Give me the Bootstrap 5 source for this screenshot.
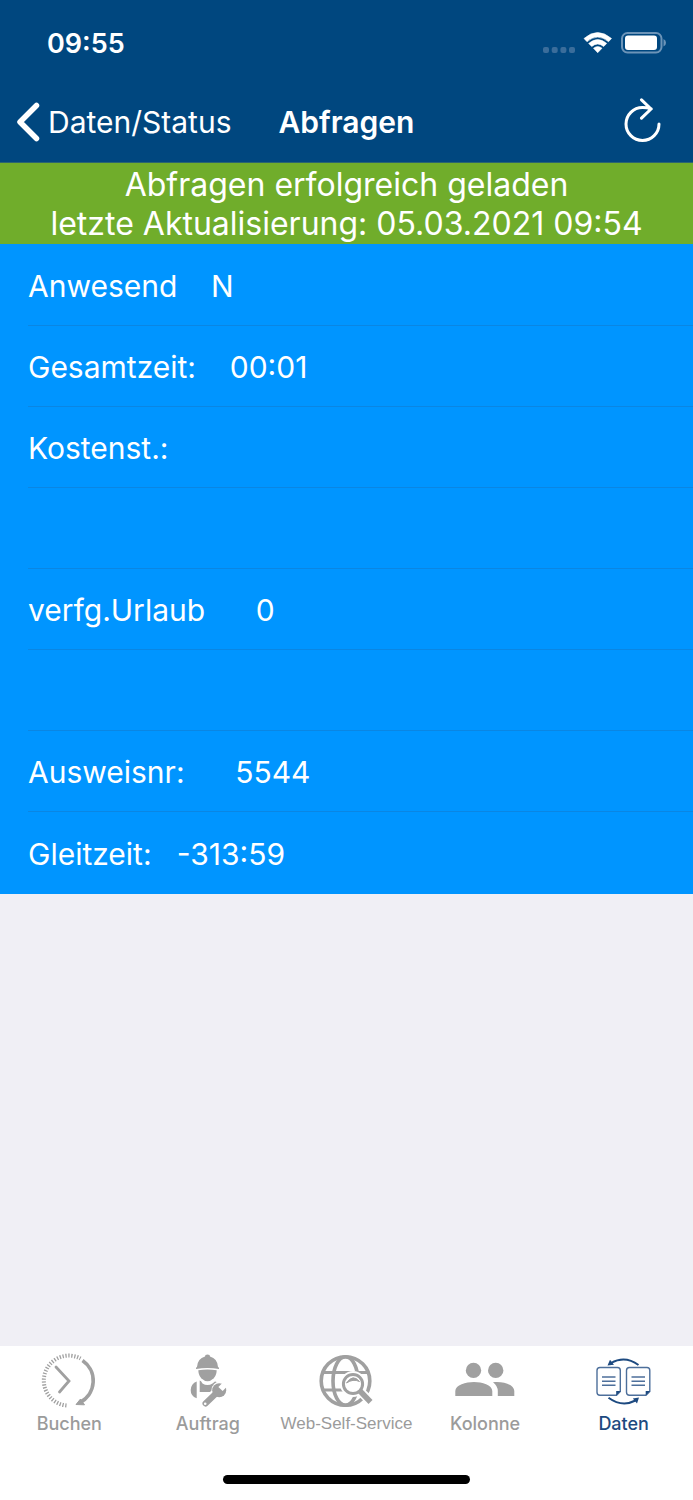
<!DOCTYPE html>
<html lang="de">
<head>
<meta charset="utf-8">
<meta name="viewport" content="width=device-width, initial-scale=1">
<title>Abfragen</title>
<link href="https://cdn.jsdelivr.net/npm/bootstrap@5.3.0/dist/css/bootstrap.min.css" rel="stylesheet">
<style>
  body { font-family: Inter, "Liberation Sans", sans-serif; background: #f0eff5; }
  svg { display: block; flex: none; }
  .app-top { background: #00477f; border-bottom: 1px solid #2b6570; }
  .status-row { height: 84px; padding: 3px 27px 0 47px; }
  .status-time { font-size: 27px; font-weight: 600; line-height: 32px; }
  .title-row { height: 78px; padding: 0 32px 2px 16px; }
  .title-row > * { line-height: 40px; }
  .back-link { font-size: 30px; gap: 8px; }
  .page-title { font-size: 30px; font-weight: 600; }
  .notice { background: #70ad2b; font-size: 32px; line-height: 39px; padding: 2px 0 1px; }
  .query-list { background: #0095ff; padding: 1px 0 1px 28px; font-size: 30px; line-height: 40px; }
  .query-list li { height: 81px; padding-top: 2px; white-space: pre; border-bottom: 1px solid #0a86e3; }
  .query-list li:last-child { border-bottom: 0; }
  .tab-bar { height: 154px; padding-top: 7px; }
  .tab-item { color: #9b9b9b; font-size: 18px; line-height: 24px; font-weight: 500; gap: 3px; }
  .tab-item.active { color: #1d4a80; }
  .tab-item.tight { font-family: "Liberation Sans", sans-serif; font-weight: 400; font-size: 17px; white-space: nowrap; }
  .home-bar { width: 247px; height: 9px; background: #000; }
</style>
</head>
<body>
<div class="min-vh-100 d-flex flex-column">
  <header class="app-top text-white">
    <div class="status-row d-flex align-items-center justify-content-between">
      <span class="status-time">09:55</span>
      <svg width="124" height="24" viewBox="0 0 124 24" aria-hidden="true">
        <g fill="#3a6d9b"><rect x="1" y="15" width="6" height="6" rx="2"/><rect x="9.700" y="15" width="6" height="6" rx="2"/><rect x="18.400" y="15" width="6" height="6" rx="2"/><rect x="27" y="15" width="6" height="6" rx="2"/></g>
        <g fill="#fff">
          <path d="M42 6.500Q55.500-5.500 69.500 6.500L66.500 9.700Q55.500.5 45 9.700Z" stroke="#fff" stroke-width=".6" stroke-linejoin="round"/>
          <path d="M46.700 11.400Q55.700 3.800 64.700 11.400L61.700 14.500Q55.700 9.500 49.700 14.500Z" stroke="#fff" stroke-width=".6" stroke-linejoin="round"/>
          <path d="M51.500 16.200Q55.700 13 60 16.200L55.700 20.700Z" stroke="#fff" stroke-width=".6" stroke-linejoin="round"/>
          <rect x="83" y="3.500" width="32" height="14.500" rx="3"/>
        </g>
        <rect x="80" y="1" width="39.500" height="19.500" rx="5.500" fill="none" stroke="#6c94b8" stroke-width="2"/>
        <path d="M121.500 7q2.500 1 2.500 3.800t-2.500 3.800z" fill="#6c94b8"/>
      </svg>
    </div>
    <div class="title-row d-flex align-items-center position-relative">
      <a href="#" class="back-link d-flex align-items-center text-white text-decoration-none">
        <svg width="24" height="40" viewBox="0 0 24 40" fill="none" stroke="#fff" stroke-width="5.500" stroke-linecap="round" stroke-linejoin="round" aria-hidden="true"><path d="M20.500 3.500 4 20 20.500 36.500"/></svg>
        Daten/Status
      </a>
      <h1 class="page-title m-0 position-absolute start-50 translate-middle-x">Abfragen</h1>
      <button type="button" class="btn border-0 p-0 ms-auto" aria-label="Aktualisieren">
        <svg width="37" height="48" viewBox="0 0 37 48" fill="none" stroke="#fff" stroke-width="3" stroke-linecap="round" aria-hidden="true"><path d="M35 26A16.500 16.500 0 1 1 18.500 9.500Q23 9.500 27 10.800M17.500 1.800 27 11 17.500 20.200"/></svg>
      </button>
    </div>
  </header>

  <div class="notice text-white text-center" role="status">
    <div>Abfragen erfolgreich geladen</div>
    <div>letzte Aktualisierung: 05.03.2021 09:54</div>
  </div>

  <main class="flex-grow-1">
    <ul class="query-list list-unstyled text-white m-0">
      <li class="d-flex align-items-center">Anwesend    N</li>
      <li class="d-flex align-items-center">Gesamtzeit:    00:01</li>
      <li class="d-flex align-items-center">Kostenst.:</li>
      <li></li>
      <li class="d-flex align-items-center">verfg.Urlaub      0</li>
      <li></li>
      <li class="d-flex align-items-center">Ausweisnr:      5544</li>
      <li class="d-flex align-items-center">Gleitzeit:   -313:59</li>
    </ul>
  </main>

  <footer class="tab-bar bg-white d-flex flex-column justify-content-between align-items-center">
    <nav class="row row-cols-5 g-0 w-100">
      <a href="#" class="col tab-item d-flex flex-column align-items-center text-decoration-none">
        <svg width="56" height="56" viewBox="0 0 56 56" fill="none" stroke="#a0a0a0" aria-hidden="true">
          <path d="M25.500 52.500A25 25 0 1 1 39.500 5.500" stroke-width="4" stroke-dasharray="1.300 1.600"/>
          <path d="M41.500 7.500A24.500 24.500 0 0 1 39 49.500" stroke-width="3.600"/>
          <path d="M35 51.500 39.500 46 43.500 51.800Z" fill="#a0a0a0" stroke-width="1"/>
          <path d="M15 14 28 28 18.500 39" stroke-width="2.800" stroke-linecap="round"/>
        </svg>
        <span>Buchen</span>
      </a>
      <a href="#" class="col tab-item d-flex flex-column align-items-center text-decoration-none">
        <svg width="56" height="56" viewBox="0 0 56 56" fill="#a0a0a0" aria-hidden="true">
          <path d="M17 14Q17.500 5.500 25 3.500L25.500 2Q27.500 1 29.500 2L30 3.500Q37.500 5.500 38 14L39 14.800V16Q27.500 14 16 16V14.800Z"/>
          <path d="M18.300 17.300Q27.500 15.800 36.700 17.300Q36.500 22.500 33.500 25.500Q27.500 31 21.500 25.500Q18.500 22.500 18.300 17.300Z"/>
          <path d="M16.700 28.500V45.300Q10.500 43 10.700 37Q11 30.500 16.700 28.500ZM19.700 27.500Q21 27.500 22.500 30.500Q27.500 33.500 32.500 30.500L35 28.500 40 30V39H19.700Z"/>
          <path d="M24.500 51 38 38" stroke="#fff" stroke-width="9.500"/>
          <circle cx="40" cy="37" r="8.500" fill="#fff"/>
          <path d="M25.500 50.500 38 38.500" stroke="#a0a0a0" stroke-width="6" stroke-linecap="round"/>
          <circle cx="39.200" cy="37.200" r="7"/>
          <path d="M40.500 36 49 27.500" stroke="#fff" stroke-width="6"/>
          <circle cx="25.200" cy="50.700" r="1.300" fill="#fff"/>
        </svg>
        <span>Auftrag</span>
      </a>
      <a href="#" class="col tab-item tight d-flex flex-column align-items-center text-decoration-none">
        <svg width="56" height="56" viewBox="0 0 56 56" fill="none" stroke="#a0a0a0" stroke-width="3.600" aria-hidden="true">
          <circle cx="27.500" cy="28" r="24.300"/>
          <ellipse cx="27.500" cy="28" rx="12.500" ry="24.300"/>
          <path d="M5 19.500H50M4 37H45" stroke-width="3.200"/>
          <circle cx="35" cy="31" r="11.500" fill="#fff" stroke="#fff" stroke-width="3"/>
          <path d="M42 38 50 46" stroke="#fff" stroke-width="9"/>
          <circle cx="35" cy="31" r="9.600" fill="#fff" stroke-width="3"/>
          <path d="M28.500 30Q35 20.500 41.500 28.500Q35 25.500 28.500 30Z" fill="#a0a0a0" stroke-width="1"/>
          <path d="M42 38 52.500 49" stroke-width="5.500"/>
        </svg>
        <span>Web-Self-Service</span>
      </a>
      <a href="#" class="col tab-item d-flex flex-column align-items-center text-decoration-none">
        <svg width="60" height="56" viewBox="0 0 60 56" fill="#a0a0a0" aria-hidden="true">
          <circle cx="18.500" cy="17.400" r="7.700"/><circle cx="40.700" cy="17.400" r="7.700"/>
          <path d="M.3 43V38C.3 32 11 29 19 29S37.300 32 37.300 38V43ZM38 29.200C49 28 59.300 32 59.300 38V43H42.800V38Q42.800 33 38 29.200Z"/>
        </svg>
        <span>Kolonne</span>
      </a>
      <a href="#" class="col tab-item active d-flex flex-column align-items-center text-decoration-none" aria-current="page">
        <svg width="56" height="56" viewBox="0 0 56 56" fill="none" stroke="#4d6f9b" aria-hidden="true">
          <path d="M4 14.500H21.500Q24.300 14.500 24.300 17.500V38.500L20.500 42.200H4Q1 42.200 1 39.200V17.500Q1 14.500 4 14.500ZM33.500 14.500H51Q53.800 14.500 53.800 17.500V38.500L50 42.200H33.500Q30.500 42.200 30.500 39.200V17.500Q30.500 14.500 33.500 14.500Z" stroke-width="1.400"/>
          <path d="M24.600 38 20.200 42.500V38ZM54.100 38 49.700 42.500V38Z" fill="#1d4a80" stroke="none"/>
          <path d="M6 24H19.500M6 28.200H19.500M6 32.300H19.500M35.500 24H49M35.500 28.200H49M35.500 32.300H49" stroke-width="1.500"/>
          <path d="M15 10Q29 2 42.500 12M12.500 44.700Q26 54.500 39.500 47.500" stroke="#1d4a80" stroke-width="2"/>
          <path d="M11.500 12.500 14 6.700 18 11.800ZM43 44.500 36.800 45.500 41 50.500Z" fill="#1d4a80" stroke="none"/>
        </svg>
        <span>Daten</span>
      </a>
    </nav>
    <div class="home-bar rounded-pill mb-3"></div>
  </footer>
</div>
<script src="https://cdn.jsdelivr.net/npm/bootstrap@5.3.0/dist/js/bootstrap.bundle.min.js"></script>
</body>
</html>
